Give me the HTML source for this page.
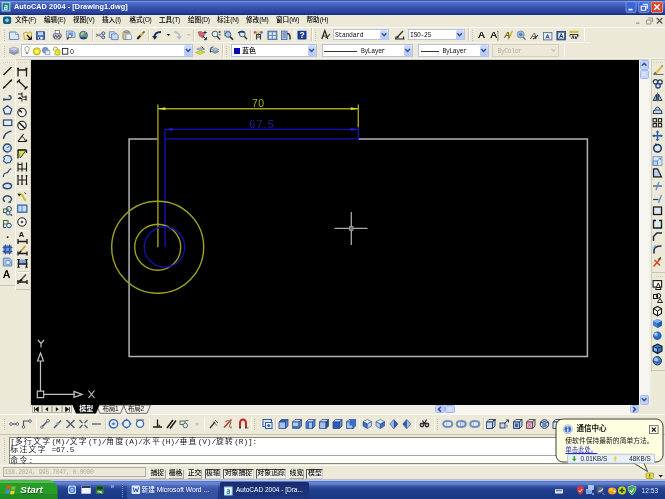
<!DOCTYPE html>
<html><head><meta charset="utf-8"><title>AutoCAD 2004 - [Drawing1.dwg]</title>
<style>
html,body{margin:0;padding:0;}
body{width:665px;height:499px;overflow:hidden;background:#ece9d8;position:relative;font-family:"Liberation Sans","Noto Sans CJK SC",sans-serif;}
.a{position:absolute;}
.x{white-space:nowrap;}
.u{letter-spacing:-.2px;}
.cmd .cj{font-size:7.800px;letter-spacing:1.340px;}
.cmd .la{font-family:"Liberation Mono",monospace;font-size:7.800px;letter-spacing:-0.110px;}
#draw{left:31.200px;top:60px;width:607.700px;height:344.600px;background:#000;}
svg{position:absolute;left:0;top:0;filter:blur(0.350px);}
#w{position:absolute;left:0;top:0;width:665px;height:499px;overflow:hidden;}
#t{position:absolute;left:0;top:0;width:665px;height:499px;filter:blur(0.300px);}
</style></head><body>
<div id="w">
<div id="draw" class="a"></div>
<div class="a " style="left:0px;top:0px;width:665px;height:14.6px;background:linear-gradient(#3c5ca4 0%,#3c5ca4 5%,#7090e0 10%,#4e6ad0 18%,#4462c0 30%,#3a58b0 48%,#3048a8 68%,#2a409c 85%,#1c3070 95%,#1a2c68 100%);"></div>
<div class="a " style="left:0px;top:14.6px;width:665px;height:1.4px;background:#e6edf5;"></div>
<div class="a " style="left:0px;top:26.5px;width:665px;height:0.8px;background:#fbfaf4;"></div>
<div class="a " style="left:0px;top:41.6px;width:590px;height:0.7px;background:#e0dccc;"></div>
<div class="a " style="left:0px;top:42.3px;width:590px;height:0.8px;background:#f6f4ea;"></div>
<div class="a " style="left:0px;top:57.6px;width:665px;height:1px;background:#f4f2e8;"></div>
<div class="a " style="left:16px;top:58.6px;width:650px;height:1.4px;background:#d2d0c6;"></div>
<div class="a " style="left:4px;top:29.5px;width:1.2px;height:11px;background:repeating-linear-gradient(#b4b0a0 0,#b4b0a0 1px,#f8f6ee 1px,#f8f6ee 2px);opacity:.8"></div>
<div class="a " style="left:4px;top:45.5px;width:1.2px;height:11px;background:repeating-linear-gradient(#b4b0a0 0,#b4b0a0 1px,#f8f6ee 1px,#f8f6ee 2px);opacity:.8"></div>
<div class="a " style="left:48.5px;top:29.5px;width:0.7px;height:11px;background:#d0ccbc;"></div>
<div class="a " style="left:49.2px;top:29.5px;width:0.7px;height:11px;background:#fbfaf4;"></div>
<div class="a " style="left:92px;top:29.5px;width:0.7px;height:11px;background:#d0ccbc;"></div>
<div class="a " style="left:92.7px;top:29.5px;width:0.7px;height:11px;background:#fbfaf4;"></div>
<div class="a " style="left:148px;top:29.5px;width:0.7px;height:11px;background:#d0ccbc;"></div>
<div class="a " style="left:148.7px;top:29.5px;width:0.7px;height:11px;background:#fbfaf4;"></div>
<div class="a " style="left:193px;top:29.5px;width:0.7px;height:11px;background:#d0ccbc;"></div>
<div class="a " style="left:193.7px;top:29.5px;width:0.7px;height:11px;background:#fbfaf4;"></div>
<div class="a " style="left:250px;top:29.5px;width:0.7px;height:11px;background:#d0ccbc;"></div>
<div class="a " style="left:250.7px;top:29.5px;width:0.7px;height:11px;background:#fbfaf4;"></div>
<div class="a " style="left:293.5px;top:29.5px;width:0.7px;height:11px;background:#d0ccbc;"></div>
<div class="a " style="left:294.2px;top:29.5px;width:0.7px;height:11px;background:#fbfaf4;"></div>
<div class="a " style="left:311px;top:28px;width:0.7px;height:13px;background:#d0ccbc;"></div>
<div class="a " style="left:311.7px;top:28px;width:0.7px;height:13px;background:#fbfaf4;"></div>
<div class="a " style="left:315px;top:29.5px;width:1.2px;height:11px;background:repeating-linear-gradient(#b4b0a0 0,#b4b0a0 1px,#f8f6ee 1px,#f8f6ee 2px);opacity:.8"></div>
<div class="a " style="left:468px;top:28px;width:0.7px;height:13px;background:#d0ccbc;"></div>
<div class="a " style="left:468.7px;top:28px;width:0.7px;height:13px;background:#fbfaf4;"></div>
<div class="a " style="left:472px;top:29.5px;width:1.2px;height:11px;background:repeating-linear-gradient(#b4b0a0 0,#b4b0a0 1px,#f8f6ee 1px,#f8f6ee 2px);opacity:.8"></div>
<div class="a " style="left:583.5px;top:28px;width:0.7px;height:13px;background:#d0ccbc;"></div>
<div class="a " style="left:584.2px;top:28px;width:0.7px;height:13px;background:#fbfaf4;"></div>
<div class="a " style="left:222px;top:44px;width:0.7px;height:13px;background:#d0ccbc;"></div>
<div class="a " style="left:222.7px;top:44px;width:0.7px;height:13px;background:#fbfaf4;"></div>
<div class="a " style="left:226px;top:45.5px;width:1.2px;height:11px;background:repeating-linear-gradient(#b4b0a0 0,#b4b0a0 1px,#f8f6ee 1px,#f8f6ee 2px);opacity:.8"></div>
<div class="a " style="left:563.5px;top:44px;width:0.7px;height:13px;background:#d0ccbc;"></div>
<div class="a " style="left:564.2px;top:44px;width:0.7px;height:13px;background:#fbfaf4;"></div>
<div class="a " style="left:332.5px;top:29.3px;width:56.5px;height:11.2px;background:#fff;border:0.700px solid #b8c4dc;box-sizing:border-box;"></div>
<div class="a " style="left:380px;top:30px;width:8.3px;height:9.8px;background:linear-gradient(#cfdcfc,#b4c8f8);border-radius:1.500px;"></div>
<div class="a " style="left:407.5px;top:29.3px;width:57px;height:11.2px;background:#fff;border:0.700px solid #b8c4dc;box-sizing:border-box;"></div>
<div class="a " style="left:455.5px;top:30px;width:8.3px;height:9.8px;background:linear-gradient(#cfdcfc,#b4c8f8);border-radius:1.500px;"></div>
<div class="a " style="left:21px;top:44.3px;width:172px;height:12.8px;background:#fff;border:0.700px solid #b8c4dc;box-sizing:border-box;"></div>
<div class="a " style="left:184px;top:45px;width:8.3px;height:11.4px;background:linear-gradient(#cfdcfc,#b4c8f8);border-radius:1.500px;"></div>
<div class="a " style="left:230.5px;top:44.3px;width:86px;height:12.8px;background:#fff;border:0.700px solid #b8c4dc;box-sizing:border-box;"></div>
<div class="a " style="left:307.5px;top:45px;width:8.3px;height:11.4px;background:linear-gradient(#cfdcfc,#b4c8f8);border-radius:1.500px;"></div>
<div class="a " style="left:234.3px;top:48.3px;width:5.7px;height:5.7px;background:#0808b8;"></div>
<div class="a " style="left:321.5px;top:44.3px;width:91px;height:12.8px;background:#fff;border:0.700px solid #b8c4dc;box-sizing:border-box;"></div>
<div class="a " style="left:403.5px;top:45px;width:8.3px;height:11.4px;background:linear-gradient(#cfdcfc,#b4c8f8);border-radius:1.500px;"></div>
<div class="a " style="left:323.7px;top:51.2px;width:33.7px;height:0.8px;background:#333;"></div>
<div class="a " style="left:417.5px;top:44.3px;width:71px;height:12.8px;background:#fff;border:0.700px solid #b8c4dc;box-sizing:border-box;"></div>
<div class="a " style="left:479.5px;top:45px;width:8.3px;height:11.4px;background:linear-gradient(#cfdcfc,#b4c8f8);border-radius:1.500px;"></div>
<div class="a " style="left:420.5px;top:51.2px;width:18px;height:0.8px;background:#333;"></div>
<div class="a " style="left:492px;top:44.3px;width:66.5px;height:12.8px;background:#ece9d8;border:0.700px solid #d4d0c0;box-sizing:border-box;"></div>
<div class="a " style="left:14.6px;top:60px;width:0.7px;height:226px;background:#c8c4b4;"></div>
<div class="a " style="left:15.3px;top:60px;width:0.8px;height:230px;background:#f8f7f0;"></div>
<div class="a " style="left:30.2px;top:59px;width:0.8px;height:348px;background:#d8d4c4;"></div>
<div class="a " style="left:0px;top:284.5px;width:14.6px;height:0.7px;background:#c8c4b4;"></div>
<div class="a " style="left:15.5px;top:288.5px;width:15px;height:0.7px;background:#c8c4b4;"></div>
<div class="a " style="left:2.5px;top:61.5px;width:10px;height:1px;background:repeating-linear-gradient(90deg,#c0bcac 0,#c0bcac 1px,#f8f6ee 1px,#f8f6ee 2px);opacity:.7"></div>
<div class="a " style="left:17.5px;top:61.5px;width:10px;height:1px;background:repeating-linear-gradient(90deg,#c0bcac 0,#c0bcac 1px,#f8f6ee 1px,#f8f6ee 2px);opacity:.7"></div>
<div class="a " style="left:17.5px;top:103.5px;width:11px;height:0.7px;background:#d4d0c0;"></div>
<div class="a " style="left:17.5px;top:104.2px;width:11px;height:0.7px;background:#f8f6ee;"></div>
<div class="a " style="left:17.5px;top:188.5px;width:11px;height:0.7px;background:#d4d0c0;"></div>
<div class="a " style="left:17.5px;top:189.2px;width:11px;height:0.7px;background:#f8f6ee;"></div>
<div class="a " style="left:17.5px;top:229.5px;width:11px;height:0.7px;background:#d4d0c0;"></div>
<div class="a " style="left:17.5px;top:230.2px;width:11px;height:0.7px;background:#f8f6ee;"></div>
<div class="a " style="left:17.5px;top:271px;width:11px;height:0.7px;background:#d4d0c0;"></div>
<div class="a " style="left:17.5px;top:271.7px;width:11px;height:0.7px;background:#f8f6ee;"></div>
<div class="a " style="left:639px;top:59.5px;width:10px;height:345.5px;background:#f6f5ef;"></div>
<div class="a " style="left:639.5px;top:59.5px;width:9.3px;height:10px;background:linear-gradient(90deg,#cddafc,#b9cbf8);border:0.600px solid #a4b8ec;border-radius:1.500px;box-sizing:border-box;"></div>
<div class="a " style="left:639.5px;top:69.8px;width:9.3px;height:9.4px;background:#c5d4fb;border:0.600px solid #a4b8ec;border-radius:1.500px;box-sizing:border-box;"></div>
<div class="a " style="left:639.5px;top:394.5px;width:9.3px;height:10px;background:linear-gradient(90deg,#cddafc,#b9cbf8);border:0.600px solid #a4b8ec;border-radius:1.500px;box-sizing:border-box;"></div>
<div class="a " style="left:649px;top:59px;width:2px;height:346px;background:#f2f0e6;"></div>
<div class="a " style="left:651.3px;top:60px;width:0.7px;height:312px;background:#d0ccbc;"></div>
<div class="a " style="left:653.5px;top:61.5px;width:9px;height:1px;background:repeating-linear-gradient(90deg,#c0bcac 0,#c0bcac 1px,#f8f6ee 1px,#f8f6ee 2px);opacity:.7"></div>
<div class="a " style="left:652px;top:271.5px;width:13px;height:0.7px;background:#c8c4b4;"></div>
<div class="a " style="left:653.5px;top:276px;width:9px;height:1px;background:repeating-linear-gradient(90deg,#c0bcac 0,#c0bcac 1px,#f8f6ee 1px,#f8f6ee 2px);opacity:.7"></div>
<div class="a " style="left:652px;top:370px;width:13px;height:0.7px;background:#c8c4b4;"></div>
<div class="a " style="left:31px;top:404.6px;width:608px;height:9px;background:#efede3;"></div>
<div class="a " style="left:434.5px;top:405px;width:204.5px;height:8.5px;background:#f6f5ef;"></div>
<div class="a " style="left:434.5px;top:405.2px;width:10.3px;height:8.3px;background:linear-gradient(90deg,#cddafc,#b9cbf8);border:0.600px solid #a4b8ec;border-radius:1.500px;box-sizing:border-box;"></div>
<div class="a " style="left:445px;top:405.2px;width:10px;height:8.3px;background:#c5d4fb;border:0.600px solid #a4b8ec;border-radius:1.500px;box-sizing:border-box;"></div>
<div class="a " style="left:629.5px;top:405.2px;width:9.5px;height:8.3px;background:linear-gradient(90deg,#cddafc,#b9cbf8);border:0.600px solid #a4b8ec;border-radius:1.500px;box-sizing:border-box;"></div>
<div class="a " style="left:31.5px;top:405.3px;width:10px;height:8px;background:#ece9d8;border:0.600px solid #b8b4a4;box-sizing:border-box;"></div>
<div class="a " style="left:41.8px;top:405.3px;width:10px;height:8px;background:#ece9d8;border:0.600px solid #b8b4a4;box-sizing:border-box;"></div>
<div class="a " style="left:52.1px;top:405.3px;width:10px;height:8px;background:#ece9d8;border:0.600px solid #b8b4a4;box-sizing:border-box;"></div>
<div class="a " style="left:62.4px;top:405.3px;width:10px;height:8px;background:#ece9d8;border:0.600px solid #b8b4a4;box-sizing:border-box;"></div>
<div class="a " style="left:0px;top:413.7px;width:665px;height:0.7px;background:#d0ccbc;"></div>
<div class="a " style="left:0px;top:414.4px;width:665px;height:0.8px;background:#fbfaf4;"></div>
<div class="a " style="left:0px;top:434.3px;width:665px;height:0.7px;background:#c8c4b4;"></div>
<div class="a " style="left:4px;top:418.5px;width:1.2px;height:12px;background:repeating-linear-gradient(#b4b0a0 0,#b4b0a0 1px,#f8f6ee 1px,#f8f6ee 2px);opacity:.8"></div>
<div class="a " style="left:35.5px;top:418px;width:0.7px;height:12px;background:#d0ccbc;"></div>
<div class="a " style="left:36.2px;top:418px;width:0.7px;height:12px;background:#fbfaf4;"></div>
<div class="a " style="left:105px;top:418px;width:0.7px;height:12px;background:#d0ccbc;"></div>
<div class="a " style="left:105.7px;top:418px;width:0.7px;height:12px;background:#fbfaf4;"></div>
<div class="a " style="left:148.5px;top:418px;width:0.7px;height:12px;background:#d0ccbc;"></div>
<div class="a " style="left:149.2px;top:418px;width:0.7px;height:12px;background:#fbfaf4;"></div>
<div class="a " style="left:203.5px;top:418px;width:0.7px;height:12px;background:#d0ccbc;"></div>
<div class="a " style="left:204.2px;top:418px;width:0.7px;height:12px;background:#fbfaf4;"></div>
<div class="a " style="left:250.5px;top:417px;width:0.7px;height:14px;background:#d0ccbc;"></div>
<div class="a " style="left:251.2px;top:417px;width:0.7px;height:14px;background:#fbfaf4;"></div>
<div class="a " style="left:254px;top:418.5px;width:1.2px;height:12px;background:repeating-linear-gradient(#b4b0a0 0,#b4b0a0 1px,#f8f6ee 1px,#f8f6ee 2px);opacity:.8"></div>
<div class="a " style="left:275px;top:418px;width:0.7px;height:12px;background:#d0ccbc;"></div>
<div class="a " style="left:275.7px;top:418px;width:0.7px;height:12px;background:#fbfaf4;"></div>
<div class="a " style="left:358.5px;top:418px;width:0.7px;height:12px;background:#d0ccbc;"></div>
<div class="a " style="left:359.2px;top:418px;width:0.7px;height:12px;background:#fbfaf4;"></div>
<div class="a " style="left:414.5px;top:418px;width:0.7px;height:12px;background:#d0ccbc;"></div>
<div class="a " style="left:415.2px;top:418px;width:0.7px;height:12px;background:#fbfaf4;"></div>
<div class="a " style="left:433.5px;top:417px;width:0.7px;height:14px;background:#d0ccbc;"></div>
<div class="a " style="left:434.2px;top:417px;width:0.7px;height:14px;background:#fbfaf4;"></div>
<div class="a " style="left:437px;top:418.5px;width:1.2px;height:12px;background:repeating-linear-gradient(#b4b0a0 0,#b4b0a0 1px,#f8f6ee 1px,#f8f6ee 2px);opacity:.8"></div>
<div class="a " style="left:483px;top:418px;width:0.7px;height:12px;background:#d0ccbc;"></div>
<div class="a " style="left:483.7px;top:418px;width:0.7px;height:12px;background:#fbfaf4;"></div>
<div class="a " style="left:0px;top:435px;width:665px;height:30px;background:#ece9d8;"></div>
<div class="a " style="left:3.5px;top:438px;width:1.2px;height:24px;background:repeating-linear-gradient(#b4b0a0 0,#b4b0a0 1px,#f8f6ee 1px,#f8f6ee 2px);opacity:.8"></div>
<div class="a " style="left:9px;top:436.5px;width:631px;height:27.5px;background:#fff;border:0.700px solid #8c8878;box-sizing:border-box;"></div>
<div class="a " style="left:9.5px;top:454.6px;width:621px;height:0.7px;background:#a8a498;"></div>
<div class="a " style="left:631px;top:437px;width:8.5px;height:17.5px;background:#f2f0e6;"></div>
<div class="a " style="left:0px;top:465px;width:665px;height:15px;background:#ece9d8;"></div>
<div class="a " style="left:0px;top:465px;width:665px;height:0.7px;background:#fbfaf4;"></div>
<div class="a " style="left:2.5px;top:467.3px;width:143.5px;height:10px;background:#ebe8d9;border:0.700px solid #b4b0a0;box-sizing:border-box;"></div>
<div class="a " style="left:149px;top:468.5px;width:16.6px;height:10px;background:#ece9d8;border:0.600px solid #f8f8f4;border-right-color:#aaa698;border-bottom-color:#aaa698;box-sizing:border-box;"></div>
<div class="a " style="left:167.7px;top:468.5px;width:15.9px;height:10px;background:#ece9d8;border:0.600px solid #f8f8f4;border-right-color:#aaa698;border-bottom-color:#aaa698;box-sizing:border-box;"></div>
<div class="a " style="left:186.6px;top:468.5px;width:15.9px;height:10px;background:#ece9d8;border:0.600px solid #f8f8f4;border-right-color:#aaa698;border-bottom-color:#aaa698;box-sizing:border-box;"></div>
<div class="a " style="left:204.7px;top:468.5px;width:16.5px;height:10px;background:#f3f1e8;border:0.800px solid #555;border-right-color:#ccc;border-bottom-color:#ccc;box-sizing:border-box;"></div>
<div class="a " style="left:223.3px;top:468.5px;width:30.4px;height:10px;background:#f3f1e8;border:0.800px solid #555;border-right-color:#ccc;border-bottom-color:#ccc;box-sizing:border-box;"></div>
<div class="a " style="left:255.8px;top:468.5px;width:30.7px;height:10px;background:#f3f1e8;border:0.800px solid #555;border-right-color:#ccc;border-bottom-color:#ccc;box-sizing:border-box;"></div>
<div class="a " style="left:288.9px;top:468.5px;width:15.1px;height:10px;background:#ece9d8;border:0.600px solid #f8f8f4;border-right-color:#aaa698;border-bottom-color:#aaa698;box-sizing:border-box;"></div>
<div class="a " style="left:306.3px;top:468.5px;width:17.2px;height:10px;background:#f3f1e8;border:0.800px solid #555;border-right-color:#ccc;border-bottom-color:#ccc;box-sizing:border-box;"></div>
<div class="a " style="left:0px;top:479.3px;width:665px;height:1px;background:#b8bccc;"></div>
<div class="a " style="left:0px;top:480px;width:665px;height:19px;background:linear-gradient(#a8bcf0 0%,#b8ccf8 4%,#5874c0 8%,#6c88d4 14%,#5c7ac8 22%,#3c58a8 32%,#2a4698 42%,#223e8c 58%,#1c3a84 80%,#1c3688 100%);"></div>
<div class="a " style="left:127px;top:482px;width:91px;height:16.5px;background:rgba(110,140,225,.28);border-radius:1.500px;"></div>
<div class="a " style="left:219.5px;top:482px;width:89px;height:16.5px;background:linear-gradient(#1a2c6c,#1c3278 40%,#1e367e);border-radius:1.500px;"></div>
<div class="a " style="left:122px;top:483.5px;width:1px;height:13px;background:repeating-linear-gradient(#6c94e8 0,#6c94e8 1px,#1c44a0 1px,#1c44a0 2px);"></div>
<svg width="665" height="499" viewBox="0 0 665 499">
<g fill="none" stroke-width="1.400">
<path d="M157.500 138.900H129.100V356.400H587.400V138.900H358.500" stroke="#b2b2b2" stroke-width="1.500"/>
<path d="M165 247V129.400M165 138.900H358.300" stroke="#1212b4"/>
<path d="M157.900 104.500V247.300M157.900 108.700H358.300M358.300 104.500V127.500" stroke="#a0a01c"/>
<path d="M157.900 108.700l7.500 -1.400v2.800zM358.300 108.700l-7.500 -1.400v2.800z" fill="#d8e420" stroke="none"/>
<path d="M165 129.400H358.300M358.300 127.500V139" stroke="#1212b4"/>
<path d="M165 129.400l7.500 -1.400v2.800zM358.300 129.400l-7.500 -1.400v2.800z" fill="#2020e0" stroke="none"/>
<circle cx="157.700" cy="247.200" r="46" stroke="#a0a01c"/>
<circle cx="157.700" cy="247.200" r="23" stroke="#a0a01c"/>
<circle cx="164.500" cy="247" r="20.200" stroke="#1212a8"/>
<path d="M334.500 228.400H367.500M351.300 212V245" stroke="#a8a8a8" stroke-width="1.300"/>
<rect x="349.600" y="226.500" width="3.400" height="3.800" fill="#707070" stroke="#a8a8a8" stroke-width=".8"/>
<path d="M37.300 391.200h6.400v6.400h-6.400zM40.500 391V360.500M43.700 394.400H75M40.500 353l-3 8h6zM82 394.400l-8 -3v6z" stroke="#c0c0c0" stroke-width="1.200"/>
<path d="M38 340l3 3.500l3 -3.500M41 343.500V347.500M88.500 390.500l6 7.500M94.500 390.500l-6 7.500" stroke="#c0c0c0" stroke-width="1.200"/>
</g>
<text x="252" y="107" font-size="10.400" letter-spacing=".4" fill="#b4b41c" font-family="Liberation Sans, sans-serif">70</text>
<text x="249" y="127.500" font-size="11.500" letter-spacing=".9" fill="#20208c" font-family="Liberation Sans, sans-serif">67.5</text>
<g transform="translate(1.5 2)"><rect x="0" y="0" width="9" height="9.5" fill="#9ccce8"/><rect x="1.3" y="1.300" width="6.4" height="7" fill="#0c7c7c"/><path d="M3 3.500h2.500v4.200M5.500 5.200h-2.300v2.300h2.300" stroke="#e8ffff" stroke-width="1.100" fill="none"/></g>
<g transform="translate(626 1.8)"><rect x="0" y="0" width="10" height="10.800" rx="1.500" fill="#3c64d4" stroke="#b4c8f4" stroke-width=".6" stroke-opacity=".8"/><rect x="2.500" y="7" width="4" height="1.600" fill="#fff"/></g>
<g transform="translate(638.7 1.8)"><rect x="0" y="0" width="10.300" height="10.800" rx="1.500" fill="#3c64d4" stroke="#b4c8f4" stroke-width=".6" stroke-opacity=".8"/><path d="M4 2.500h4.500v4.500M2.500 4.500h4.500v4h-4.500z" fill="none" stroke="#fff" stroke-width="1.100"/></g>
<g transform="translate(651.2 1.8)"><rect x="0" y="0" width="11.500" height="10.800" rx="1.500" fill="#d8442c" stroke="#f4d8d0" stroke-width=".6"/><path d="M3 2.500l5.500 5.500M8.500 2.500l-5.500 5.500" stroke="#fff" stroke-width="1.500"/></g>
<g transform="translate(3 16.5)"><rect x="0" y="0" width="8.200" height="7.600" rx="2" fill="#155c7c"/><path d="M4.100 1.500l2.400 2.300l-2.400 2.300l-2.400 -2.300z" fill="#7cd0f4"/></g>
<g transform="translate(634.5 16.5)"><rect x="1.500" y="6" width="3.500" height="1.300" fill="#999"/></g>
<g transform="translate(645 16.5)"><path d="M3 1.500h4.500v4M1.500 3.500h4.500v4h-4.500z" fill="none" stroke="#8c8c88" stroke-width=".9"/></g>
<g transform="translate(655.3 16.5)"><path d="M1.500 1.500l5.500 5.500M7 1.500l-5.500 5.500" stroke="#555" stroke-width="1.200"/></g>
<g transform="translate(9 31)"><path d="M.5 1h6.200l3 2.500v5h-9.200z" fill="#d8e6f6" stroke="#5c82b0" stroke-width=".9"/><path d="M6.700 1v2.500h3" fill="#f4f8fc" stroke="#5c82b0" stroke-width=".7"/></g>
<g transform="translate(23 31)"><path d="M.5 2l3.500 -1l1 1.200l3.500 -.8v5.600l-7 1.500z" fill="#f6e6a8" stroke="#b09848" stroke-width=".8"/><path d="M4 4l4 4.300M8.300 8.500v-3M8.300 8.500h-3.300" stroke="#111" stroke-width="1.200" fill="none"/><path d="M6.500 .5l2.500 1.500" stroke="#e8c820" stroke-width="1.200"/></g>
<g transform="translate(36 31)"><rect x=".5" y=".8" width="8" height="7.700" fill="#3d6cc0" stroke="#27488c" stroke-width=".8"/><rect x="2" y="1.200" width="5" height="3" fill="#c4daf8"/><rect x="2.300" y="5.800" width="4.400" height="2.700" fill="#e4e8f0"/><rect x="3" y="6.200" width="1.200" height="2" fill="#27488c"/></g>
<g transform="translate(53 30.5)"><rect x="2.200" y="0" width="4.200" height="3.500" fill="#fff" stroke="#667" stroke-width=".7"/><rect x=".4" y="3.300" width="7.800" height="3.800" rx=".8" fill="#c8ccd8" stroke="#555c70" stroke-width=".8"/><rect x="1.800" y="6" width="5" height="2.500" fill="#fff" stroke="#667" stroke-width=".7"/><circle cx="2.500" cy="6.500" r="1.500" fill="none" stroke="#556" stroke-width=".8"/><circle cx="6" cy="6.500" r="1.500" fill="none" stroke="#556" stroke-width=".8"/></g>
<g transform="translate(65.5 30.5)"><path d="M1 .5h6.500l2 2v4.500h-8.500z" fill="#c0d8f4" stroke="#6c8cc0" stroke-width=".8"/><rect x="3" y="2" width="4.500" height="3.500" fill="#6c9ce0"/><path d="M3.500 6.500l-2 2.500" stroke="#334" stroke-width="1.300"/><circle cx="4.500" cy="5.500" r="1.800" fill="#e8f0fc" stroke="#556" stroke-width=".7"/></g>
<g transform="translate(79 30.5)"><circle cx="4.500" cy="4.700" r="4" fill="#4c8cd8" stroke="#234c8c" stroke-width=".7"/><path d="M1.500 3.500q2 -3 4 -1.500q-1 2.500 -3 3z" fill="#e8c838"/><path d="M5 4q2.500 -1 3 1.500q-1.500 2 -3 1z" fill="#58a848"/><path d="M1.500 7.500h6" stroke="#223" stroke-width="1.200"/><path d="M6.500 1.500l2 -1" stroke="#fff" stroke-width="1"/></g>
<g transform="translate(95.5 31)"><path d="M.5 3l6 3M.5 5.500l6 -3" stroke="#6a7078" stroke-width="1"/><circle cx="7.800" cy="2.300" r="1.400" fill="none" stroke="#27488c" stroke-width="1"/><circle cx="7.800" cy="6.300" r="1.400" fill="none" stroke="#27488c" stroke-width="1"/></g>
<g transform="translate(108.8 31)"><path d="M.5 .8h5l1.500 1.500v4.500h-6.500z" fill="#e0ecfa" stroke="#4c74b4" stroke-width=".8"/><path d="M2.800 2.800h5l1.500 1.500v4.300h-6.500z" fill="#c8dcf4" stroke="#4c74b4" stroke-width=".8"/></g>
<g transform="translate(122.5 30.5)"><rect x=".5" y="1.200" width="7" height="7.800" rx=".8" fill="#d8c898" stroke="#8c7c50" stroke-width=".8"/><rect x="2.300" y=".3" width="3.400" height="2" fill="#a8aab0" stroke="#667" stroke-width=".5"/><path d="M3.500 3.500h3.800l1.700 1.500v4h-5.500z" fill="#e8f0fc" stroke="#6c8cc0" stroke-width=".7"/></g>
<g transform="translate(136.5 31)"><path d="M.8 8l3.200 -3.500" stroke="#222" stroke-width="2"/><path d="M4 4.500l3.500 -3.500" stroke="#c8a838" stroke-width="1.800"/><path d="M6.500 2l1.500 -1.500" stroke="#554" stroke-width="1.500"/></g>
<g transform="translate(152 30.5)"><path d="M2.500 7.500q-.5 -6 6.500 -6" stroke="#1c2c5c" stroke-width="2" fill="none"/><path d="M0 5.500l5.500 .3l-2.800 3.500z" fill="#1c2c5c"/></g>
<g transform="translate(166.5 34)"><path d="M0 0h3.600l-1.800 2z" fill="#111"/></g>
<g transform="translate(173.5 30.5)"><path d="M6 7.500q.5 -6 -5.500 -6" stroke="#b8bcc8" stroke-width="1.800" fill="none"/><path d="M8.500 5.500l-5.500 .3l2.800 3.500z" fill="#b8bcc8"/></g>
<g transform="translate(187 34)"><path d="M0 0h3.600l-1.800 2z" fill="#c0bcb0"/></g>
<g transform="translate(197 30.5)"><path d="M1 1.500l3.500 -.5l3 3l-1.500 3.500l-3.500 -2z" fill="#d06878" stroke="#a04858" stroke-width=".6"/><path d="M5.500 5l3.500 3.500M9.500 9.200v-2.500M9.500 9.200h-2.500M8 .3v3.400M6.300 2h3.400" stroke="#1c2c4c" stroke-width="1"/></g>
<g transform="translate(211.5 30.5)"><circle cx="3.500" cy="3.500" r="2.900" fill="#e4f0f8" stroke="#46607c" stroke-width="1"/><path d="M5.500 5.800l3 3.200" stroke="#333c50" stroke-width="1.500"/><path d="M7 1.500h2.500M8.200 .3v2.400M7.200 4.300h2.200" stroke="#334" stroke-width=".8"/></g>
<g transform="translate(224 30.5)"><rect x=".5" y=".5" width="5" height="4.500" fill="#9cc0ec" stroke="#6c8cb8" stroke-width=".6"/><circle cx="4" cy="4" r="2.800" fill="#a8c8ec" stroke="#46607c" stroke-width="1"/><path d="M6 6.200l3 3" stroke="#222" stroke-width="1.600"/></g>
<g transform="translate(237.5 30.5)"><circle cx="4.800" cy="3.500" r="2.900" fill="#dce8f4" stroke="#46607c" stroke-width="1"/><path d="M6.800 5.800l2.700 3" stroke="#333c50" stroke-width="1.500"/><path d="M.5 2.500q3 -2.500 6.500 -.5" stroke="#1c3c74" stroke-width="1.600" fill="none"/></g>
<g transform="translate(253.5 30.5)"><rect x=".3" y=".8" width="2.800" height="2.200" fill="#d84858"/><rect x="3.500" y=".8" width="2.800" height="2.200" fill="#e8d038"/><rect x="6.600" y=".8" width="2.600" height="2.200" fill="#4868c8"/><path d="M2.500 4h5M3 4v5M7 4v5M3 6.500h4M5 3v2" stroke="#333c50" stroke-width="1.100" fill="none"/></g>
<g transform="translate(267.5 30.5)"><rect x=".4" y=".6" width="9" height="8.500" fill="#6c94c8" stroke="#46689c" stroke-width=".8"/><rect x="1.500" y="1.800" width="2.800" height="2.600" fill="#d8e8f8"/><rect x="5.500" y="1.800" width="2.800" height="2.600" fill="#d8e8f8"/><rect x="1.500" y="5.500" width="2.800" height="2.600" fill="#d8e8f8"/><rect x="5.500" y="5.500" width="2.800" height="2.600" fill="#d8e8f8"/></g>
<g transform="translate(281 30.5)"><rect x=".5" y=".6" width="5.500" height="8.500" fill="#a8c4e8" stroke="#46689c" stroke-width=".8"/><path d="M1.800 2.500h3M1.800 4.500h3M1.800 6.500h3" stroke="#46689c" stroke-width=".8"/><path d="M6 3q3 0 3 3.500v2.500" stroke="#333c50" stroke-width="1.600" fill="none"/></g>
<g transform="translate(297.5 30.5)"><rect x="0" y=".3" width="9" height="8.700" rx=".8" fill="#1c3c94"/></g>
<g transform="translate(321 30)"><path d="M.8 9l3 -8.500l3 8.500M2 6h3.600" stroke="#222" stroke-width="1.200" fill="none"/><path d="M4.500 8q2.500 -1 4.500 -4" stroke="#443" stroke-width="1.300" fill="none"/></g>
<g transform="translate(381.8 33.3)"><path d="M0 0l2.300 2.400l2.300 -2.400" stroke="#2c4c94" stroke-width="1.400" fill="none"/></g>
<g transform="translate(394.5 30.5)"><path d="M.5 8.500h9.500M1.500 8.500v-2.500M9 8.500v-2.500" stroke="#222" stroke-width="1.100"/><path d="M2.500 7l6 -6.500" stroke="#443" stroke-width="1.500"/><path d="M2 6.500l2 .5" stroke="#222" stroke-width="1.500"/></g>
<g transform="translate(457.3 33.3)"><path d="M0 0l2.300 2.400l2.300 -2.400" stroke="#2c4c94" stroke-width="1.400" fill="none"/></g>
<g transform="translate(497.5 31.5)"><path d="M.5 0v8.500M-.3 0h1.600M-.3 8.500h1.600" stroke="#334" stroke-width=".7" stroke-dasharray="1 .6"/></g>
<g transform="translate(508 31)"><path d="M0 8.500l4.500 -8.500" stroke="#c8a828" stroke-width="1.300"/></g>
<g transform="translate(516.5 30.5)"><circle cx="4.200" cy="4" r="3.600" fill="#9cb8d8" stroke="#7890a8" stroke-width=".8"/><circle cx="4.200" cy="4" r="1.600" fill="#5c7ca8"/><path d="M6.500 6.500l2.500 2.700" stroke="#6c7c94" stroke-width="1.500"/></g>
<g transform="translate(533 36)"><path d="M0 3q3 -1 5 -4" stroke="#333" stroke-width="1.200" fill="none"/></g>
<g transform="translate(543 32)"><rect x=".4" y=".4" width="8.500" height="7.500" fill="#e0ecf8" stroke="#46689c" stroke-width=".8"/><path d="M3 6.500l1.500 -4l1.500 4M3.500 5.300h2" stroke="#1c2c5c" stroke-width=".8" fill="none"/></g>
<g transform="translate(556.5 31)"><rect x=".4" y=".4" width="8.500" height="8.500" fill="#46689c" stroke="#1c3c74" stroke-width=".8"/><rect x="1.800" y="1.800" width="5.700" height="5.700" fill="#e8f0fc"/><path d="M3 7l1.700 -4.500l1.700 4.500M3.500 5.500h2.400" stroke="#1c2c5c" stroke-width=".9" fill="none"/></g>
<g transform="translate(569.5 30.5)"><rect x="0" y=".3" width="9" height="2.200" fill="#d8c030"/><path d="M.5 4h8M.5 4v2M8.500 4v2M2 8.500l1.300 -3.500l1.300 3.500M5.500 5.500l1 3l2 -4" stroke="#223" stroke-width=".9" fill="none"/></g>
<g transform="translate(9 47)"><path d="M0 5.500l5 -2l5 2l-5 2.300z" fill="#8c9cb4" stroke="#6c7c98" stroke-width=".5"/><path d="M0 3.800l5 -2l5 2l-5 2.300z" fill="#a8b8d0" stroke="#6c7c98" stroke-width=".5"/><path d="M0 2l5 -2l5 2l-5 2.300z" fill="#c4d0e4" stroke="#7c8ca8" stroke-width=".5"/></g>
<g transform="translate(185.8 49.1)"><path d="M0 0l2.300 2.400l2.300 -2.400" stroke="#2c4c94" stroke-width="1.400" fill="none"/></g>
<g transform="translate(24.8 46.5)"><path d="M2.300 0a2.300 2.500 0 0 1 1.200 4.600v1.500h-2.400v-1.500a2.300 2.500 0 0 1 1.200 -4.600z" fill="#fffce0" stroke="#8c8870" stroke-width=".7"/><path d="M1.300 7h2" stroke="#777" stroke-width=".9"/></g>
<g transform="translate(33 47.5)"><circle cx="3.800" cy="3.900" r="3.600" fill="#ece428" stroke="#a8a020" stroke-width=".8"/><circle cx="3.800" cy="3.900" r="1.600" fill="#f8f480"/></g>
<g transform="translate(42 47)"><circle cx="3.300" cy="3.300" r="3" fill="#7c9cc8" stroke="#5c7498" stroke-width=".6"/><rect x="3.300" y="3.300" width="4.500" height="4.500" fill="#e4ecf8" stroke="#7c8ca8" stroke-width=".6"/></g>
<g transform="translate(52.5 47)"><path d="M1 3.500v-1.500a2 2 0 0 1 4 0v1.500" fill="none" stroke="#b0a428" stroke-width="1"/><rect x="2.500" y="2.800" width="5" height="5.200" rx=".8" fill="#ece438" stroke="#a89c20" stroke-width=".7"/></g>
<g transform="translate(62 48)"><rect x=".4" y=".4" width="5.400" height="5.800" fill="#fff" stroke="#222" stroke-width=".9"/></g>
<g transform="translate(195.5 46.5)"><path d="M1 2.500l4.500 -1.500l4 1.500l-4.500 1.500z" fill="#a8b8d0" stroke="#6c7c98" stroke-width=".5"/><path d="M0 6l5 -2l4.500 1.500l-5 2.500z" fill="#d8d838" stroke="#98982c" stroke-width=".5"/><path d="M6 0l2 2" stroke="#334" stroke-width="1"/></g>
<g transform="translate(209.5 46)"><path d="M2 5.500l4 -1.500l3.500 1.500l-4 2z" fill="#8c9cb4" stroke="#5c6c88" stroke-width=".5"/><path d="M2 3.500l4 -1.500l3.500 1.500l-4 2z" fill="#b4c4dc" stroke="#5c6c88" stroke-width=".5"/><path d="M4 1q-3.500 0 -3 4" stroke="#2c4c94" stroke-width="1.200" fill="none"/><path d="M0 5l1 2l1.500 -2z" fill="#2c4c94"/></g>
<g transform="translate(309.3 49.1)"><path d="M0 0l2.300 2.400l2.300 -2.400" stroke="#2c4c94" stroke-width="1.400" fill="none"/></g>
<g transform="translate(405.3 49.1)"><path d="M0 0l2.300 2.400l2.300 -2.400" stroke="#2c4c94" stroke-width="1.400" fill="none"/></g>
<g transform="translate(481.3 49.1)"><path d="M0 0l2.300 2.400l2.300 -2.400" stroke="#2c4c94" stroke-width="1.400" fill="none"/></g>
<g transform="translate(551.5 49.2)"><path d="M0 0l2 2l2 -2" stroke="#c4c0b0" stroke-width="1.100" fill="none"/></g>
<g transform="translate(2.5 66)"><path d="M1 9l8 -8" stroke="#1a1a1a" stroke-width="1.3" fill="none"/></g>
<g transform="translate(2.5 79)"><path d="M1 9l8 -8" stroke="#1a1a1a" stroke-width="1.3" fill="none"/><path d="M0 10l1.500 -3l1.500 1.500zM10 0l-1.500 3l-1.500 -1.500z" fill="#1a1a1a"/></g>
<g transform="translate(2.5 93)"><path d="M1 6.500h6.500q1.500 -.5 1 -2.500q-.5 -1.800 -2.500 -1" stroke="#2c4878" stroke-width="1.3" fill="none"/><path d="M.5 6.500h2" stroke="#2c4878" stroke-width="2"/></g>
<g transform="translate(2.5 105)"><path d="M5 .8l4.300 3.200l-1.600 4.800h-5.400l-1.600 -4.800z" fill="#e0ecfa" stroke="#2c4878" stroke-width="1.200"/></g>
<g transform="translate(2.5 119)"><rect x="1" y="1" width="8.300" height="5.500" fill="#e8f0fa" stroke="#2c4878" stroke-width="1.200"/></g>
<g transform="translate(2.5 130)"><path d="M1 9q.5 -6.500 8 -8" stroke="#2c4878" stroke-width="1.4" fill="none"/></g>
<g transform="translate(2.5 143)"><circle cx="4.800" cy="5" r="4" fill="#c8dcf4" stroke="#2c4878" stroke-width="1.300"/><path d="M4.800 5l2.500 -2.500" stroke="#2c4878" stroke-width=".9"/></g>
<g transform="translate(2.5 155)"><path d="M2 4q-2 -2.500 1 -3q1.500 -1.500 3 0q3 -.5 2.500 2q2 2 -.5 3q0 2.500 -2.500 1.500q-2 1.500 -3 -.5q-2.500 -.5 -.5 -3z" fill="#d4e4f8" stroke="#2c4878" stroke-width="1.100"/></g>
<g transform="translate(2.5 168)"><path d="M.8 9q.5 -4 2.500 -4t2.500 -1.500t3 -3" stroke="#2c4878" stroke-width="1.2" fill="none"/></g>
<g transform="translate(2.5 181)"><ellipse cx="4.800" cy="5" rx="4.200" ry="2.700" fill="#d4e4f8" stroke="#2c4878" stroke-width="1.400"/></g>
<g transform="translate(2.5 194)"><path d="M2.500 7.500a4.200 3 0 1 1 5.500 -.5" stroke="#2c4878" stroke-width="1.4" fill="none"/><path d="M5 8.500l3.500 .5l-.5 -2.800z" fill="#2c4878"/></g>
<g transform="translate(2.5 206)"><rect x="1" y="3" width="4.500" height="3.500" fill="#d8e8d0" stroke="#3c6c4c" stroke-width="1"/><circle cx="6.500" cy="3" r="2.500" fill="none" stroke="#2c4878" stroke-width="1"/><circle cx="5.500" cy="7" r="2" fill="#e0ecfa" stroke="#2c4878" stroke-width="1"/><path d="M8 8.500l1.500 1" stroke="#111" stroke-width="1.200"/></g>
<g transform="translate(2.5 219)"><rect x="1" y="1.500" width="4.500" height="3.500" fill="#e8e8c0" stroke="#3c6c4c" stroke-width="1"/><circle cx="6.500" cy="6.500" r="2.300" fill="#e0ecfa" stroke="#2c4878" stroke-width="1"/><path d="M1 5v3.500h2.500" stroke="#2c4878" stroke-width="1" fill="none"/></g>
<g transform="translate(2.5 232)"><rect x="4.300" y="4.300" width="1.600" height="1.600" fill="#111"/></g>
<g transform="translate(2.5 244.5)"><rect x="1.500" y="1.500" width="7" height="7" fill="#6c98dc" stroke="#2c54a0" stroke-width="1"/><path d="M0 3h10M0 7h10M3 0v10M7 0v10" stroke="#2c54a0" stroke-width=".9"/></g>
<g transform="translate(2.5 257)"><path d="M.8 1h6l2.500 2.500v5.500h-8.500z" fill="#a4c4ec" stroke="#5c84c0" stroke-width=".9"/><circle cx="5.500" cy="5.500" r="2.300" fill="#e8f0fc" stroke="#5c84c0" stroke-width=".8"/></g>
<g transform="translate(17 67)"><path d="M1 1.500v8M9.500 1.500v8M1 3h8.500" stroke="#1a1a1a" stroke-width="1.3" fill="none"/><path d="M0 1.500h2M8.500 1.500h2" stroke="#1a1a1a" stroke-width="1.3" fill="none"/></g>
<g transform="translate(17 79)"><path d="M1.500 2l7.500 7" stroke="#1a1a1a" stroke-width="1.3" fill="none"/><path d="M0 3.500l3 -3M7.500 10.500l3 -3" stroke="#1a1a1a" stroke-width="1.5" fill="none"/></g>
<g transform="translate(17 92)"><path d="M1 2h4v3h4.500M1 6.500h4v3M5 2v-1.500M9 3.500v5" stroke="#1a1a1a" stroke-width="1" fill="none"/><path d="M2 5.500h2M6.500 7.500h3" stroke="#1a1a1a" stroke-width="0.8" fill="none"/></g>
<g transform="translate(17 107.5)"><circle cx="5" cy="5" r="4.200" fill="#f4f4f0" stroke="#1a1a1a" stroke-width="1.100"/><path d="M5 5l-2.500 -2.500" stroke="#1a1a1a" stroke-width="1.300"/><path d="M2 2l2.500 .5l-2 2z" fill="#1a1a1a"/></g>
<g transform="translate(17 120.5)"><circle cx="5" cy="5" r="4.200" fill="#f4f4f0" stroke="#1a1a1a" stroke-width="1.100"/><path d="M2 2l6 6" stroke="#1a1a1a" stroke-width="1.600"/></g>
<g transform="translate(17 133)"><path d="M1 8.500h8.500M1 8.500l5.500 -7.500M9.500 8.500v-2" stroke="#1a1a1a" stroke-width="1.2" fill="none"/><path d="M5 3.500q3 1.500 3.500 5" stroke="#1a1a1a" stroke-width="0.9" fill="none"/></g>
<g transform="translate(17 149)"><path d="M1 1h8.500l-6.500 8z" fill="#d8e048" stroke="#7c8418" stroke-width=".6"/><path d="M1 .5v9M1 1h8.500M9.500 1v3" stroke="#1a1a1a" stroke-width="1.3" fill="none"/><path d="M9.500 1l-6.500 8" stroke="#444" stroke-width="1" fill="none"/></g>
<g transform="translate(17 162)"><path d="M1 .5v9M5 .5v9M9.500 .5v9M1 2.500h4M1 7h8.500" stroke="#1a1a1a" stroke-width="1.1" fill="none"/></g>
<g transform="translate(17 175)"><path d="M1 .5v9M5 .5v9M9.500 .5v9M1 5h8.500" stroke="#1a1a1a" stroke-width="1.1" fill="none"/><path d="M0 .8h2M4 .8h2M8.500 .8h2M0 9.200h2M4 9.200h2M8.500 9.200h2" stroke="#1a1a1a" stroke-width="1" fill="none"/></g>
<g transform="translate(17 192)"><path d="M2 2.500q3 -1 4 2t3 4" stroke="#c8c020" stroke-width="2" fill="none"/><path d="M.5 1.500l3.500 .5l-2 2.500z" fill="#111"/><path d="M7.500 .5l1.500 1.500" stroke="#222" stroke-width="1"/></g>
<g transform="translate(17 204.5)"><rect x=".4" y=".4" width="9.700" height="7.500" fill="#5c88cc" stroke="#3c64a8" stroke-width=".8"/><rect x="1.500" y="1.500" width="3" height="5.300" fill="#c8dcf8"/><rect x="5.500" y="1.500" width="3.500" height="5.300" fill="#c8dcf8"/></g>
<g transform="translate(17 217)"><circle cx="5" cy="5" r="4.200" fill="#f8f8f4" stroke="#1a1a1a" stroke-width="1"/><path d="M3.800 5h2.400M5 3.800v2.400" stroke="#1a1a1a" stroke-width="1.100"/></g>
<g transform="translate(17 238)"><path d="M.5 3.500h10M1 1v5M10 1v5" stroke="#1a1a1a" stroke-width="1.3" fill="none"/></g>
<g transform="translate(17 246)"><path d="M3 6l5.500 -6" stroke="#c8a020" stroke-width="1.700"/><path d="M2.500 7l1.500 -2" stroke="#222" stroke-width="1.600"/><path d="M.5 7.500h10M1 5.500v4M10 5.500v4" stroke="#1a1a1a" stroke-width="1.3" fill="none"/></g>
<g transform="translate(17 258.5)"><rect x="2" y="1" width="7" height="4" fill="#7ca4e0"/><path d="M.5 5.500h10M1.500 .5v8.500M9.500 .5v8.500" stroke="#1a1a1a" stroke-width="1.3" fill="none"/><path d="M.3 1h2.400M8.300 1h2.400M.3 8.700h2.400M8.300 8.700h2.400" stroke="#1a1a1a" stroke-width="1" fill="none"/></g>
<g transform="translate(17 274)"><path d="M3 7l6 -6.500" stroke="#555" stroke-width="1.700"/><path d="M.5 8h10M1 6v4M10 6v4" stroke="#1a1a1a" stroke-width="1.4" fill="none"/><path d="M2.500 7.500l2.500 -2" stroke="#111" stroke-width="1.800"/></g>
<path d="M641.85 65.7l2.300 -2.400l2.300 2.400" stroke="#2c4c94" stroke-width="1.500" fill="none"/>
<g transform="translate(642 72.5)"><path d="M0 0h4.300M0 1.500h4.300M0 3h4.300" stroke="#e4ecfc" stroke-width=".7"/></g>
<path d="M641.85 398.3l2.300 2.400l2.300 -2.400" stroke="#2c4c94" stroke-width="1.500" fill="none"/>
<g transform="translate(652.5 65.5)"><path d="M1 9h10" stroke="#555" stroke-width=".9"/><path d="M2.500 8.500l7.500 -8" stroke="#d0c050" stroke-width="2.200"/><path d="M1.500 9l2 -2" stroke="#6c6c5c" stroke-width="2"/><path d="M8.500 1l2 -1" stroke="#888" stroke-width="1"/></g>
<g transform="translate(652.5 79)"><circle cx="3" cy="2.800" r="2.200" stroke="#27406c" stroke-width="1.3" fill="none"/><circle cx="7.500" cy="3" r="2.200" stroke="#27406c" stroke-width="1.3" fill="none"/><circle cx="5.500" cy="6.800" r="2.200" fill="#d8e4f4" stroke="#27406c" stroke-width="1.300"/></g>
<g transform="translate(652.5 92)"><path d="M5 .5v9" stroke="#444" stroke-width=".8"/><path d="M4 2v6.500h-3.500z" fill="#8caad4" stroke="#27406c" stroke-width="1"/><path d="M6 2v6.500h3.500z" fill="#c0d0e8" stroke="#27406c" stroke-width="1"/></g>
<g transform="translate(652.5 105)"><path d="M2.500 4.500q2.500 -5 5 0" stroke="#27406c" stroke-width="1.1" fill="none"/><path d="M.8 8.500q0 -3.500 1.500 -3.500h5.500q1.500 0 1.500 3.500z" fill="#c4d4ec" stroke="#27406c" stroke-width="1.100"/></g>
<g transform="translate(652.5 118)"><rect x=".6" y=".6" width="3.300" height="3.300" fill="#f4f4f0" stroke="#1a1a1a" stroke-width="1.100"/><rect x="5.800" y=".6" width="3.300" height="3.300" fill="#f4f4f0" stroke="#1a1a1a" stroke-width="1.100"/><rect x=".6" y="5.600" width="3.300" height="3.300" fill="#f4f4f0" stroke="#1a1a1a" stroke-width="1.100"/><rect x="5.800" y="5.600" width="3.300" height="3.300" fill="#f4f4f0" stroke="#1a1a1a" stroke-width="1.100"/></g>
<g transform="translate(652.5 130.5)"><path d="M5 .5v9.500M.2 5.200h9.600" stroke="#2c5ca8" stroke-width="1.500"/><path d="M5 -.3l-1.800 2.300h3.600zM5 10.700l-1.800 -2.300h3.600zM-.3 5.200l2.300 -1.800v3.600zM10.300 5.200l-2.300 -1.800v3.600z" fill="#2c5ca8"/></g>
<g transform="translate(652.5 143)"><circle cx="5" cy="5.300" r="3.800" fill="#e0e8f4" stroke="#1c3460" stroke-width="1.500"/><path d="M2.500 .3l3.200 1.200l-2.600 2z" fill="#1c3460"/></g>
<g transform="translate(652.5 156)"><rect x=".6" y=".6" width="8.800" height="8.800" fill="#dce8f8" stroke="#7c9cd0" stroke-width="1"/><rect x=".6" y="5" width="4.500" height="4.400" fill="#b8d0f0" stroke="#5c84c0" stroke-width=".9"/><path d="M5 5l3 -3M8 2v2M8 2h-2" stroke="#5c84c0" stroke-width=".8" fill="none"/></g>
<g transform="translate(652.5 168)"><path d="M1 .8h4l4 8h-8z" fill="#b8d0f0" stroke="#1a1a1a" stroke-width="1.200"/></g>
<g transform="translate(652.5 181)"><path d="M.5 5h9" stroke="#27406c" stroke-width="1.100"/><path d="M3.500 9l3 -8" stroke="#5c8cd0" stroke-width="1.300"/></g>
<g transform="translate(652.5 194)"><path d="M.5 5.500h5" stroke="#27406c" stroke-width="1.200"/><path d="M6 9l3 -8" stroke="#5c8cd0" stroke-width="1.300"/><path d="M5.500 5.500h2" stroke="#88a" stroke-width=".8"/></g>
<g transform="translate(652.5 206)"><rect x="1" y="1" width="8" height="7.500" fill="#dce8f8" stroke="#1a1a1a" stroke-width="1.300"/></g>
<g transform="translate(652.5 219.5)"><path d="M3.500 1h-2.500v7.500h8v-7.500h-2.500" fill="#dce8f8" stroke="#1a1a1a" stroke-width="1.300"/></g>
<g transform="translate(652.5 232)"><path d="M1 9v-4.500l3.500 -3.500h5" stroke="#222c40" stroke-width="1.5" fill="none"/></g>
<g transform="translate(652.5 244.5)"><path d="M1.500 9v-3q0 -4.500 7.500 -4.500" stroke="#1c3460" stroke-width="1.6" fill="none"/><path d="M.5 4q1 -3 3 -3.500" stroke="#9cb8dc" stroke-width="1.200" fill="none"/></g>
<g transform="translate(652.5 257)"><path d="M1 9.500l7 -8M2 3l5.500 5.500" stroke="#d84818" stroke-width="1.500"/><path d="M6 2.500l2.500 -2" stroke="#333" stroke-width="1.200"/></g>
<g transform="translate(652.5 280)"><rect x=".6" y=".6" width="8.500" height="6.500" fill="#f8f8f4" stroke="#1a1a1a" stroke-width="1.100"/><path d="M3 9.500l2.800 -6.500l2.800 6.500zM4 7.500h3.600" fill="#f8f8f4" stroke="#1a1a1a" stroke-width="1"/></g>
<g transform="translate(652.5 293)"><rect x="1" y="1.500" width="4" height="4" fill="#f8f8f4" stroke="#1a1a1a" stroke-width="1"/><circle cx="6" cy="2.800" r="2.200" fill="none" stroke="#1a1a1a" stroke-width="1"/><path d="M5 9.500l2.500 -4l2.500 4z" fill="#f8f8f4" stroke="#1a1a1a" stroke-width="1"/></g>
<g transform="translate(652.5 306)"><path d="M5 .5l4 2.200v4.800l-4 2.300l-4 -2.300v-4.800z" fill="#fafaf6" stroke="#1a1a1a" stroke-width="1.100"/><path d="M1 2.700l4 2.300l4 -2.300M5 5v4.800" stroke="#1a1a1a" stroke-width="1" fill="none"/></g>
<g transform="translate(652.5 318.5)"><path d="M5 .5l4.500 2v4.500l-4.500 2.500l-4.500 -2.500v-4.500z" fill="#3c7cd8"/><path d="M.5 2.500l4.500 -2l4.500 2l-4.500 2.300z" fill="#7cb4f0"/><path d="M5 4.800l4.500 -2.300v4.500l-4.500 2.500z" fill="#2458b0"/></g>
<g transform="translate(652.5 331)"><circle cx="4.800" cy="4.800" r="4.300" fill="#2c64b8"/><circle cx="3.600" cy="3.400" r="2.200" fill="#6ca4e8"/><circle cx="3.200" cy="3" r="1" fill="#c8e0fc"/></g>
<g transform="translate(652.5 343.5)"><path d="M5 .5l4.500 2.300v4.700l-4.500 2.500l-4.500 -2.500v-4.700z" fill="#3c74c8" stroke="#0c1c34" stroke-width="1.100"/><path d="M.5 2.800l4.500 2.200l4.500 -2.200M5 5v5" stroke="#0c1c34" stroke-width=".9" fill="none"/><path d="M1.500 3.800l3 1.500v3l-3 -1.600z" fill="#8cbcf0"/></g>
<g transform="translate(652.5 356)"><circle cx="4.800" cy="4.800" r="4.200" fill="#4c80c8" stroke="#1c3460" stroke-width="1"/><circle cx="3.600" cy="3.400" r="2" fill="#a4c8f4"/><path d="M.8 5.500q4 2 8 0" stroke="#1c3460" stroke-width=".6" fill="none"/></g>
<path d="M440.85 407.05l-2.400 2.300l2.400 2.300" stroke="#2c4c94" stroke-width="1.500" fill="none"/>
<g transform="translate(448 407.3)"><path d="M0 0v4.300M1.500 0v4.300M3 0v4.300" stroke="#e4ecfc" stroke-width=".7"/></g>
<path d="M633.05 407.05l2.400 2.300l-2.400 2.300" stroke="#2c4c94" stroke-width="1.500" fill="none"/>
<path d="M38.3 407l-3 2.300l3 2.300zM34.5 407v4.600" fill="#111" stroke="#111" stroke-width=".8"/>
<path d="M48.1 407l-3 2.300l3 2.300z" fill="#111"/>
<path d="M55.8 407l3 2.300l-3 2.300z" fill="#111"/>
<path d="M65.6 407l3 2.300l-3 2.300zM69.4 407v4.600" fill="#111" stroke="#111" stroke-width=".8"/>
<path d="M123.500 405h27l-3.500 8.300h-20z" fill="#f4f2ea" stroke="#333" stroke-width=".7"/>
<path d="M96.500 405h27.500l-3.500 8.300h-20.500z" fill="#f4f2ea" stroke="#333" stroke-width=".7"/>
<path d="M72.500 405h27l-3.500 8.500h-20z" fill="#000"/>
<g transform="translate(9.5 419)"><path d="M1.500 5h6" stroke="#4c5870" stroke-width="1.200"/><circle cx="1.500" cy="5" r="1.300" fill="#fff" stroke="#4c5870" stroke-width=".9"/><circle cx="7.800" cy="5" r="1.300" fill="#fff" stroke="#4c5870" stroke-width=".9"/></g>
<g transform="translate(22 419)"><path d="M1.500 9v-7h6" stroke="#4c5870" stroke-width="1.200" fill="none"/><circle cx="1.500" cy="8" r="1.300" fill="#fff" stroke="#4c5870" stroke-width=".9"/><circle cx="8" cy="2" r="1.300" fill="#fff" stroke="#4c5870" stroke-width=".9"/></g>
<g transform="translate(40 419)"><path d="M1.500 8.500l6.500 -7" stroke="#4c5870" stroke-width="1.400"/><circle cx="8" cy="1.800" r="1.400" fill="#fff" stroke="#4c5870" stroke-width=".9"/><circle cx="1.800" cy="8.200" r="1.200" fill="#dde" stroke="#4c5870" stroke-width=".8"/></g>
<g transform="translate(53 419)"><path d="M1 9l7 -7.500" stroke="#4c5870" stroke-width="1.400"/><path d="M3.500 5.800l2 -2" stroke="#8ca0c0" stroke-width="2.600"/></g>
<g transform="translate(65.5 419)"><path d="M1 1l8 8M9 1l-8 8" stroke="#4c5870" stroke-width="1.400"/></g>
<g transform="translate(78.5 419)"><path d="M1 1l8 8M9 1l-8 8" stroke="#4c5870" stroke-width="1.300"/><rect x="3.700" y="3.700" width="2.600" height="2.600" fill="#ece9d8"/></g>
<g transform="translate(91.5 419)"><path d="M.5 5h9" stroke="#4c5870" stroke-width="1.300"/><path d="M6 5h3.500" stroke="#9098a8" stroke-width="1.300"/></g>
<g transform="translate(108.5 418.5)"><circle cx="5" cy="5.300" r="4.200" fill="#e4ecf8" stroke="#3c68b8" stroke-width="1.400"/><circle cx="5" cy="5.300" r="1.300" fill="#3c68b8"/></g>
<g transform="translate(121.5 418.5)"><circle cx="5" cy="5.300" r="3.600" fill="#e4ecf8" stroke="#3c68b8" stroke-width="1.300"/><path d="M5 0l1.600 2h-3.200zM5 10.600l1.600 -2h-3.200zM-.3 5.300l2 -1.600v3.200zM10.300 5.300l-2 -1.600v3.200z" fill="#3c68b8"/></g>
<g transform="translate(135 418.5)"><circle cx="5" cy="5.300" r="3.600" fill="#f4f6fa" stroke="#3c68b8" stroke-width="1.300"/><path d="M1 1.500h8" stroke="#5c6c88" stroke-width="1"/></g>
<g transform="translate(152.5 419)"><path d="M.5 8h9M5 8v-7.500" stroke="#1a1a1a" stroke-width="1.300"/><path d="M5 6h2v2" stroke="#1a1a1a" stroke-width=".7" fill="none"/></g>
<g transform="translate(166 419)"><path d="M1 9l6 -8M4 9.500l6 -8" stroke="#1a1a1a" stroke-width="1.500"/></g>
<g transform="translate(179.5 419)"><rect x=".5" y="2" width="5" height="3.500" fill="#d8e8d0" stroke="#3c6c4c" stroke-width=".9"/><circle cx="5.800" cy="6.500" r="2.300" fill="#e4ecf8" stroke="#4c5c78" stroke-width=".9"/><path d="M6 1.500h3" stroke="#556" stroke-width=".8"/></g>
<g transform="translate(195 422)"><circle cx="2" cy="2" r="1.500" fill="#c4c4bc"/></g>
<g transform="translate(209 419)"><path d="M1 9l5 -6" stroke="#333" stroke-width="1.300"/><path d="M4 2.500l4 4M6 1l3 3" stroke="#555" stroke-width="1"/></g>
<g transform="translate(223 419)"><path d="M1 8.500l7.500 -8" stroke="#c03828" stroke-width="1.500"/><path d="M2 3q3 -3 6 0l-2 5.500" stroke="#806058" stroke-width="1" fill="none"/><rect x="7" y="7.500" width="2" height="2" fill="#999"/></g>
<g transform="translate(238.5 419)"><path d="M1.500 9v-5a3 3.500 0 0 1 6 0v5" stroke="#c02828" stroke-width="2" fill="none"/><rect x=".5" y="7.500" width="2" height="2" fill="#444"/><rect x="6.500" y="7.500" width="2" height="2" fill="#444"/><rect x="8.300" y="8" width="1.700" height="1.700" fill="#999"/></g>
<g transform="translate(262.5 419)"><rect x=".5" y=".5" width="8.500" height="7" fill="#dce8f8" stroke="#2c5cb0" stroke-width="1"/><rect x="3" y="3.500" width="6.500" height="6" fill="#f4f8fc" stroke="#2c5cb0" stroke-width="1"/><circle cx="6.200" cy="6.500" r="1.500" fill="#2c5cb0"/></g>
<g transform="translate(278.5 419)"><path d="M.5 3l2.500 -2.500h6.500l-2.500 2.500z" fill="#2c5cb8" stroke="#2c4c88" stroke-width=".8"/><path d="M.5 3h6.500v6.500h-6.500z" fill="#a4c0ec" stroke="#2c4c88" stroke-width=".8"/><path d="M7 3l2.500 -2.500v6.500l-2.500 2.500z" fill="#5c84cc" stroke="#2c4c88" stroke-width=".8"/></g>
<g transform="translate(292 419)"><path d="M.5 3l2.500 -2.500h6.500l-2.500 2.500z" fill="#d0e0f8" stroke="#2c4c88" stroke-width=".8"/><path d="M.5 3h6.500v6.500h-6.500z" fill="#b8cce8" stroke="#2c4c88" stroke-width=".8"/><path d="M7 3l2.500 -2.500v6.500l-2.500 2.500z" fill="#5c84cc" stroke="#2c4c88" stroke-width=".8"/><rect x="1" y="7" width="6" height="2.500" fill="#3c70c8"/></g>
<g transform="translate(305.5 419)"><path d="M.5 3l2.500 -2.500h6.500l-2.500 2.500z" fill="#d0e0f8" stroke="#2c4c88" stroke-width=".8"/><path d="M.5 3h6.500v6.500h-6.500z" fill="#a4c0ec" stroke="#2c4c88" stroke-width=".8"/><path d="M7 3l2.500 -2.500v6.500l-2.500 2.500z" fill="#5c84cc" stroke="#2c4c88" stroke-width=".8"/><rect x=".5" y="3" width="3" height="6.500" fill="#3c70c8"/></g>
<g transform="translate(319 419)"><path d="M.5 3l2.500 -2.500h6.500l-2.500 2.500z" fill="#d0e0f8" stroke="#2c4c88" stroke-width=".8"/><path d="M.5 3h6.500v6.500h-6.500z" fill="#a4c0ec" stroke="#2c4c88" stroke-width=".8"/><path d="M7 3l2.500 -2.500v6.500l-2.500 2.500z" fill="#244c9c" stroke="#2c4c88" stroke-width=".8"/></g>
<g transform="translate(332.5 419)"><path d="M.5 3l2.500 -2.500h6.500l-2.500 2.500z" fill="#d0e0f8" stroke="#2c4c88" stroke-width=".8"/><path d="M.5 3h6.500v6.500h-6.500z" fill="#2c5cb8" stroke="#2c4c88" stroke-width=".8"/><path d="M7 3l2.500 -2.500v6.500l-2.500 2.500z" fill="#5c84cc" stroke="#2c4c88" stroke-width=".8"/></g>
<g transform="translate(346 419)"><path d="M.5 3l2.500 -2.500h6.500l-2.500 2.500z" fill="#d0e0f8" stroke="#2c4c88" stroke-width=".8"/><path d="M.5 3h6.500v6.500h-6.500z" fill="#a4c0ec" stroke="#2c4c88" stroke-width=".8"/><path d="M7 3l2.500 -2.500v6.500l-2.500 2.500z" fill="#5c84cc" stroke="#2c4c88" stroke-width=".8"/><rect x="3.500" y=".5" width="6" height="6" fill="#3c70c8"/></g>
<g transform="translate(362.5 419)"><path d="M4.800 .5l4.300 2.200l-4.300 2.300l-4.300 -2.300z" fill="#e8f0fc" stroke="#2c4c88" stroke-width=".6"/><path d="M.5 2.700l4.300 2.300v4.500l-4.300 -2.500z" fill="#3c70c8" stroke="#2c4c88" stroke-width=".6"/><path d="M9.100 2.700l-4.300 2.300v4.500l4.300 -2.500z" fill="#b8d0f0" stroke="#2c4c88" stroke-width=".6"/></g>
<g transform="translate(375.5 419)"><path d="M4.800 .5l4.300 2.200l-4.300 2.300l-4.300 -2.300z" fill="#e8f0fc" stroke="#2c4c88" stroke-width=".6"/><path d="M.5 2.700l4.300 2.300v4.500l-4.300 -2.500z" fill="#b8d0f0" stroke="#2c4c88" stroke-width=".6"/><path d="M9.100 2.700l-4.300 2.300v4.500l4.300 -2.500z" fill="#3c70c8" stroke="#2c4c88" stroke-width=".6"/></g>
<g transform="translate(389 419)"><path d="M4.800 .5l4 4.500l-4 4.800l-4 -4.800z" fill="#9cbce8" stroke="#2c4c88" stroke-width=".6"/><path d="M4.800 .5v9.300l4 -4.800z" fill="#2c58a8"/></g>
<g transform="translate(402 419)"><path d="M4.800 .5l4 4.500l-4 4.800l-4 -4.800z" fill="#9cbce8" stroke="#2c4c88" stroke-width=".6"/><path d="M4.800 .5v9.300l-4 -4.800z" fill="#2c58a8"/></g>
<g transform="translate(419 419)"><circle cx="3" cy="6" r="2.400" fill="#333" /><circle cx="8" cy="6" r="2.400" fill="#333"/><circle cx="3" cy="6" r="1" fill="#ccc"/><circle cx="8" cy="6" r="1" fill="#ccc"/><path d="M3.500 1.500l2 3l2 -4" stroke="#222" stroke-width="1.200" fill="none"/></g>
<g transform="translate(442.5 419)"><rect x="0" y="1.500" width="10.500" height="7" rx="3.500" fill="#b8cce8" stroke="#5c7cb0" stroke-width=".7"/><circle cx="3.600" cy="5" r="2.500" fill="#e4ecf8" stroke="#3c5c98" stroke-width=".8"/><circle cx="6.900" cy="5" r="2.500" fill="#e4ecf8" stroke="#3c5c98" stroke-width=".8"/><ellipse cx="5.250" cy="5" rx=".9" ry="1.900" fill="#e4ecf8"/></g>
<g transform="translate(456 419)"><rect x="0" y="1.500" width="10.500" height="7" rx="3.500" fill="#b8cce8" stroke="#5c7cb0" stroke-width=".7"/><circle cx="3.600" cy="5" r="2.500" fill="#e4ecf8" stroke="#3c5c98" stroke-width=".8"/><circle cx="6.900" cy="5" r="2.500" fill="#c8d8f0" stroke="#3c5c98" stroke-width=".8"/><ellipse cx="5.250" cy="5" rx=".9" ry="1.900" fill="#c8d8f0"/></g>
<g transform="translate(469.5 419)"><rect x="0" y="1.500" width="10.500" height="7" rx="3.500" fill="#b8cce8" stroke="#5c7cb0" stroke-width=".7"/><circle cx="3.600" cy="5" r="2.500" fill="#dce4f0" stroke="#3c5c98" stroke-width=".8"/><circle cx="6.900" cy="5" r="2.500" fill="#dce4f0" stroke="#3c5c98" stroke-width=".8"/><ellipse cx="5.250" cy="5" rx=".9" ry="1.900" fill="#f8f8f8"/></g>
<g transform="translate(486 419)"><path d="M.5 3l2.500 -2.500h6l-2.500 2.500z" fill="#e8f0fc" stroke="#2c3c5c" stroke-width=".9"/><path d="M.5 3h6v6.500h-6z" fill="#c8d8f0" stroke="#2c3c5c" stroke-width=".9"/><path d="M6.500 3l2.500 -2.500v6.500l-2.500 2.500z" fill="#b8cce8" stroke="#2c3c5c" stroke-width=".9"/><path d="M7 2l3 -1.500" stroke="#333" stroke-width="1"/></g>
<g transform="translate(499.5 419)"><rect x=".5" y="4" width="5" height="5" fill="#c8d8f0" stroke="#2c3c5c" stroke-width=".9"/><path d="M4.500 5l4.500 -4M9 1v2.500M9 1h-2.500" stroke="#2c3c5c" stroke-width="1" fill="none"/><circle cx="7" cy="7" r="1.500" fill="#8ca4c8"/></g>
<g transform="translate(513 419)"><path d="M.5 3l2.500 -2.500h6l-2.500 2.500z" fill="#e8f0fc" stroke="#2c3c5c" stroke-width=".9"/><path d="M.5 3h6v6.500h-6z" fill="#a8c0e4" stroke="#2c3c5c" stroke-width=".9"/><path d="M6.500 3l2.500 -2.500v6.500l-2.500 2.500z" fill="#b8cce8" stroke="#2c3c5c" stroke-width=".9"/><rect x="2" y="4.500" width="3" height="3.500" fill="#3c64a8"/></g>
<g transform="translate(526 419)"><path d="M.5 3l2.500 -2.500h6l-2.500 2.500z" fill="#e8f0fc" stroke="#5c3c4c" stroke-width=".9"/><path d="M.5 3h6v6.500h-6z" fill="#f0c0cc" stroke="#5c3c4c" stroke-width=".9"/><path d="M6.500 3l2.500 -2.500v6.500l-2.500 2.500z" fill="#b8cce8" stroke="#5c3c4c" stroke-width=".9"/><path d="M1.500 4l4 4.500M5.500 4l-4 4.500" stroke="#c05068" stroke-width=".9"/></g>
<g transform="translate(539.5 419)"><circle cx="5" cy="5" r="4.300" fill="#c8d8f0" stroke="#2c3c5c" stroke-width="1"/><path d="M1 4q4 -3 8 0M2.500 7h5" stroke="#2c3c5c" stroke-width="1" fill="none"/><rect x="3" y="3.500" width="4" height="3" fill="#5c84c0"/></g>
<g transform="translate(552.5 419)"><path d="M.5 3l2.500 -2.500h6l-2.500 2.500z" fill="#e8f0fc" stroke="#2c3c5c" stroke-width=".9"/><path d="M.5 3h6v6.500h-6z" fill="#dce8f8" stroke="#2c3c5c" stroke-width=".9"/><path d="M6.500 3l2.500 -2.500v6.500l-2.500 2.500z" fill="#b8cce8" stroke="#2c3c5c" stroke-width=".9"/></g>
<g transform="translate(646 472)"><rect x="0" y="1" width="7.500" height="5.500" rx="1" fill="#e8dc38" stroke="#8c8420" stroke-width=".6"/><path d="M3.700 2.200v2.200M3.700 5.200v.6" stroke="#333" stroke-width="1"/></g>
<g transform="translate(658.5 475)"><path d="M0 0h4.400l-2.200 2.400z" fill="#111"/></g>
<path d="M563 419h93a7 7 0 0 1 7 7v29a7 7 0 0 1 -7 7h-12.500l4 9.500l-15.500 -9.500h-69a7 7 0 0 1 -7 -7v-29a7 7 0 0 1 7 -7z" fill="#ffffe1" stroke="#2a2a2a" stroke-width=".9"/>
<g transform="translate(563 424.5)"><circle cx="4.800" cy="4.800" r="4.500" fill="#f4f8fc" stroke="#8c9cb8" stroke-width=".7"/><circle cx="4.800" cy="4.800" r="3.300" fill="#3c6cd0"/><path d="M4.800 4.300v3" stroke="#fff" stroke-width="1.300"/><circle cx="4.800" cy="2.600" r=".8" fill="#fff"/></g>
<g transform="translate(649 425.3)"><rect x=".4" y=".4" width="8.700" height="7.700" fill="#fffff4" stroke="#555" stroke-width=".8"/><path d="M2.800 2.300l4 4M6.800 2.300l-4 4" stroke="#111" stroke-width="1.300"/></g>
<rect x="567.600" y="454.200" width="87" height="9" rx="1.200" fill="#e9f0fb" stroke="#9cb0cc" stroke-width=".7"/>
<g transform="translate(572 456)"><path d="M1.500 0h1.600v2.800h1.500l-2.300 2.600l-2.300 -2.600h1.500z" fill="#3ca83c"/></g>
<g transform="translate(613 456)"><path d="M1.500 5.400h1.600v-2.800h1.500l-2.300 -2.600l-2.300 2.600h1.500z" fill="#e8d040"/></g>
<path d="M0 480h48q9 1 9.500 9.500v9.500h-57.500z" fill="#279d27"/>
<path d="M0 480.300h48q5 .4 7 2.700h-55z" fill="#62c462" opacity=".8"/>
<path d="M0 494h57.500v5h-57.500z" fill="#1f7f1f" opacity=".6"/>
<g transform="translate(6 484.5)"><path d="M1 1.500q2 -1.500 4 -.3l-.8 3.600q-2 -1.200 -4 .3z" fill="#ec5028"/><path d="M5.800 1.500q2 1 4 -.3l-.8 3.600q-2 1.300 -4 .3z" fill="#68c838"/><path d="M0 6q2 -1.500 4 -.3l-.8 3.600q-2 -1.200 -4 .3z" fill="#3c8cf4"/><path d="M4.800 6q2 1 4 -.3l-.8 3.600q-2 1.300 -4 .3z" fill="#f8d020"/></g>
<g transform="translate(68 485.5)"><rect x="0" y="0" width="8" height="8.500" rx="1.500" fill="#c4dcf8"/><circle cx="4" cy="4.300" r="2.600" fill="none" stroke="#3c78d8" stroke-width="1.300"/><path d="M1.500 4.300h5" stroke="#3c78d8" stroke-width="1"/></g>
<g transform="translate(81.7 486)"><rect x="0" y="0" width="9" height="7.500" fill="#f0f4fa" stroke="#dde" stroke-width=".5"/><rect x="0" y="0" width="9" height="2" fill="#2c3c5c"/></g>
<g transform="translate(95.8 485.5)"><rect x="0" y="0" width="8" height="8.500" fill="#2c7c3c"/><rect x="1" y="1" width="6" height="3" fill="#1c3c2c"/><path d="M1.500 6.500h5M3 5l3 3" stroke="#e8f4e8" stroke-width="1"/></g>
<g transform="translate(131.6 485.5)"><rect x="0" y="0" width="8.500" height="8.500" rx="1" fill="#dce8fc"/><path d="M1.500 2l1.300 4.500l1.400 -3.500l1.400 3.500l1.300 -4.500" stroke="#2c54b0" stroke-width="1" fill="none"/></g>
<g transform="translate(224 486.5)"><rect x="0" y="0" width="8.600" height="9" fill="#9cd0ec"/><rect x="1.200" y="1.200" width="6.200" height="6.600" fill="#fff"/><path d="M2.800 3.200h2.600v3.800M5.400 4.900h-2.300v2.100h2.300" stroke="#1c7c8c" stroke-width="1" fill="none"/></g>
<g transform="translate(555 489.3)"><rect x="0" y="0" width="8" height="4.300" rx=".5" fill="#e4e8f0"/><rect x="1" y="1" width="6" height="1" fill="#556"/></g>
<g transform="translate(577 486)"><path d="M3.400 0q1.700 1 3.400 1q.3 5 -3.400 8q-3.700 -3 -3.400 -8q1.700 0 3.400 -1z" fill="#e03838"/><path d="M1.800 4.500l1.300 1.500l2 -3" stroke="#fff" stroke-width="1" fill="none"/></g>
<g transform="translate(586.5 485.5)"><rect x="2" y="0" width="5" height="4" fill="#a8ccf4" stroke="#dce8f8" stroke-width=".5"/><rect x="0" y="4" width="5" height="4" fill="#6ca8ec" stroke="#dce8f8" stroke-width=".5"/><path d="M5.500 8.500h2" stroke="#dde" stroke-width="1"/></g>
<g transform="translate(596.5 485.5)"><path d="M1 1l6 1l-1 5l-5 1z" fill="#606880"/><path d="M2 6q3 0 4.500 -3" stroke="#d8dce8" stroke-width="1.200" fill="none"/><path d="M6 8l2 1" stroke="#aab" stroke-width="1"/></g>
<g transform="translate(608 486)"><ellipse cx="4.200" cy="5" rx="4.200" ry="3.400" fill="#f09820"/><circle cx="3" cy="3.500" r="1.800" fill="#f8c848"/><circle cx="6.500" cy="5.500" r="1" fill="#fff"/></g>
<g transform="translate(618 486)"><circle cx="4" cy="4.500" r="4" fill="#c8d818"/><path d="M4 2v5M1.500 4.500h5" stroke="#2c3c0c" stroke-width="1.400"/></g>
<g transform="translate(628 485.5)"><path d="M4 0q2 1.200 4 1.200q.3 5.300 -4 8.300q-4.300 -3 -4 -8.300q2 0 4 -1.200z" fill="#38a848" stroke="#d8f0d8" stroke-width=".6"/><path d="M2 4.800l1.500 1.700l2.500 -3.500" stroke="#fff" stroke-width="1.100" fill="none"/></g>
</svg>
<div id="t">
<div class="a x " style="left:14px;top:2.4px;font-size:7.25px;color:#fff;font-weight:bold;line-height:10px;letter-spacing:0.1px;">AutoCAD 2004 - [Drawing1.dwg]</div>
<div class="a x " style="left:15px;top:15.2px;font-size:6.6px;line-height:10px;color:#000;font-weight:500;">文件<span class="u">(F)</span></div>
<div class="a x " style="left:44px;top:15.2px;font-size:6.6px;line-height:10px;color:#000;font-weight:500;">编辑<span class="u">(E)</span></div>
<div class="a x " style="left:73px;top:15.2px;font-size:6.6px;line-height:10px;color:#000;font-weight:500;">视图<span class="u">(V)</span></div>
<div class="a x " style="left:102px;top:15.2px;font-size:6.6px;line-height:10px;color:#000;font-weight:500;">插入<span class="u">(I)</span></div>
<div class="a x " style="left:129.5px;top:15.2px;font-size:6.6px;line-height:10px;color:#000;font-weight:500;">格式<span class="u">(O)</span></div>
<div class="a x " style="left:159px;top:15.2px;font-size:6.6px;line-height:10px;color:#000;font-weight:500;">工具<span class="u">(T)</span></div>
<div class="a x " style="left:188px;top:15.2px;font-size:6.6px;line-height:10px;color:#000;font-weight:500;">绘图<span class="u">(D)</span></div>
<div class="a x " style="left:217px;top:15.2px;font-size:6.6px;line-height:10px;color:#000;font-weight:500;">标注<span class="u">(N)</span></div>
<div class="a x " style="left:246px;top:15.2px;font-size:6.6px;line-height:10px;color:#000;font-weight:500;">修改<span class="u">(M)</span></div>
<div class="a x " style="left:276px;top:15.2px;font-size:6.6px;line-height:10px;color:#000;font-weight:500;">窗口<span class="u">(W)</span></div>
<div class="a x " style="left:306.5px;top:15.2px;font-size:6.6px;line-height:10px;color:#000;font-weight:500;">帮助<span class="u">(H)</span></div>
<div class="a x " style="left:299.5px;top:30.3px;font-size:8.5px;color:#fff;font-weight:bold;line-height:10px;">?</div>
<div class="a x " style="left:335px;top:30.5px;font-size:6.4px;font-family:'Liberation Mono',monospace;letter-spacing:-0.310px;line-height:9px;color:#111;">Standard</div>
<div class="a x " style="left:410px;top:30.5px;font-size:6.4px;font-family:'Liberation Mono',monospace;letter-spacing:-0.310px;line-height:9px;color:#111;">ISO-25</div>
<div class="a x " style="left:478.3px;top:29.3px;font-size:9.8px;line-height:11px;color:#000;text-shadow:0 0 .4px #000;">A</div>
<div class="a x " style="left:490.5px;top:29.3px;font-size:9.8px;line-height:11px;color:#000;text-shadow:0 0 .4px #000;">A</div>
<div class="a x " style="left:504px;top:29.8px;font-size:9px;line-height:11px;color:#6c6418;font-style:italic;font-weight:bold;">A</div>
<div class="a x " style="left:530.5px;top:29.5px;font-size:9.5px;line-height:11px;color:#222;font-style:italic;">A</div>
<div class="a x " style="left:70px;top:46.5px;font-size:7px;line-height:9px;color:#111;">0</div>
<div class="a x " style="left:242px;top:46.2px;font-size:7px;line-height:10px;color:#000;font-weight:500;">蓝色</div>
<div class="a x " style="left:361px;top:46.8px;font-size:6.4px;font-family:'Liberation Mono',monospace;letter-spacing:-0.400px;line-height:9px;color:#111;">ByLayer</div>
<div class="a x " style="left:442.5px;top:46.8px;font-size:6.4px;font-family:'Liberation Mono',monospace;letter-spacing:-0.400px;line-height:9px;color:#111;">ByLayer</div>
<div class="a x " style="left:497.5px;top:46.8px;font-size:6.4px;font-family:'Liberation Mono',monospace;letter-spacing:-0.400px;line-height:9px;color:#b4b0a0;">ByColor</div>
<div class="a x " style="left:3.3px;top:269.3px;font-size:10px;line-height:11px;color:#000;text-shadow:0 0 .4px #000;">A</div>
<div class="a x " style="left:18.8px;top:231.3px;font-size:7.5px;font-weight:bold;line-height:8px;color:#111;">A</div>
<div class="a x " style="left:79.3px;top:404.8px;font-size:7px;color:#fff;font-weight:bold;line-height:8.500px;">模型</div>
<div class="a x " style="left:102.5px;top:404.8px;font-size:6.6px;color:#111;line-height:8.500px;letter-spacing:-.3px">布局1</div>
<div class="a x " style="left:128px;top:404.8px;font-size:6.6px;color:#111;line-height:8.500px;letter-spacing:-.3px">布局2</div>
<div class="a x cmd" style="left:10.3px;top:436.5px;font-size:9px;line-height:9px;color:#222;"><span class="la">[</span><span class="cj">多行文字</span><span class="la">(M)/</span><span class="cj">文字</span><span class="la">(T)/</span><span class="cj">角度</span><span class="la">(A)/</span><span class="cj">水平</span><span class="la">(H)/</span><span class="cj">垂直</span><span class="la">(V)/</span><span class="cj">旋转</span><span class="la">(R)]:</span></div>
<div class="a x cmd" style="left:10.3px;top:445.2px;font-size:9px;line-height:9px;color:#222;"><span class="cj">标注文字</span><span class="la">&nbsp;=67.5</span></div>
<div class="a x cmd" style="left:10.3px;top:455.6px;font-size:9px;line-height:9px;color:#222;"><span class="cj">命令</span><span class="la">:</span></div>
<div class="a x " style="left:4.5px;top:468.5px;font-size:6.4px;font-family:'Liberation Mono',monospace;letter-spacing:-0.420px;line-height:8px;color:#b0ada0;">158.2024, 995.7047, 0.0000</div>
<div class="a x " style="left:149px;top:469.2px;font-size:6.9px;width:16.6px;text-align:center;line-height:8.500px;color:#111;font-weight:500;">捕捉</div>
<div class="a x " style="left:167.7px;top:469.2px;font-size:6.9px;width:15.9px;text-align:center;line-height:8.500px;color:#111;font-weight:500;">栅格</div>
<div class="a x " style="left:186.6px;top:469.2px;font-size:6.9px;width:15.9px;text-align:center;line-height:8.500px;color:#111;font-weight:500;">正交</div>
<div class="a x " style="left:204.7px;top:469.2px;font-size:6.9px;width:16.5px;text-align:center;line-height:8.500px;color:#111;font-weight:500;">极轴</div>
<div class="a x " style="left:223.3px;top:469.2px;font-size:6.9px;width:30.4px;text-align:center;line-height:8.500px;color:#111;font-weight:500;">对象捕捉</div>
<div class="a x " style="left:255.8px;top:469.2px;font-size:6.9px;width:30.7px;text-align:center;line-height:8.500px;color:#111;font-weight:500;">对象追踪</div>
<div class="a x " style="left:288.9px;top:469.2px;font-size:6.9px;width:15.1px;text-align:center;line-height:8.500px;color:#111;font-weight:500;">线宽</div>
<div class="a x " style="left:306.3px;top:469.2px;font-size:6.9px;width:17.2px;text-align:center;line-height:8.500px;color:#111;font-weight:500;">模型</div>
<div class="a x " style="left:576.5px;top:424.3px;font-size:7.5px;font-weight:bold;line-height:9.500px;color:#111;">通信中心</div>
<div class="a x " style="left:565.3px;top:436.3px;font-size:6.8px;line-height:9px;color:#111;">使软件保持最新的简单方法。</div>
<div class="a x " style="left:565.3px;top:446.3px;font-size:6.4px;line-height:8px;color:#2828c8;text-decoration:underline;text-decoration-thickness:0.500px;text-underline-offset:0.500px;">单击此处。</div>
<div class="a x " style="left:580.5px;top:454.7px;font-size:6.3px;line-height:8px;color:#222;">0.01KB/S</div>
<div class="a x " style="left:629.3px;top:454.7px;font-size:6.3px;line-height:8px;color:#222;">48KB/S</div>
<div class="a x " style="left:20.3px;top:484px;font-size:9.9px;font-weight:bold;font-style:italic;color:#fff;line-height:12px;text-shadow:0.500px 0.500px 0.500px #1c4c1c;">Start</div>
<div class="a x " style="left:110.5px;top:482.5px;font-size:6.5px;color:#d0dcf4;line-height:8px;">»</div>
<div class="a x " style="left:141.5px;top:485.2px;font-size:6.7px;color:#fff;line-height:9px;">新建 Microsoft Word ...</div>
<div class="a x " style="left:236px;top:485.2px;font-size:6.5px;color:#fff;line-height:9px;">AutoCAD 2004 - [Dra...</div>
<div class="a x " style="left:641.6px;top:487px;font-size:6.6px;color:#d4e0f8;line-height:8px;">12:53</div>
</div>
</div>
</body></html>
